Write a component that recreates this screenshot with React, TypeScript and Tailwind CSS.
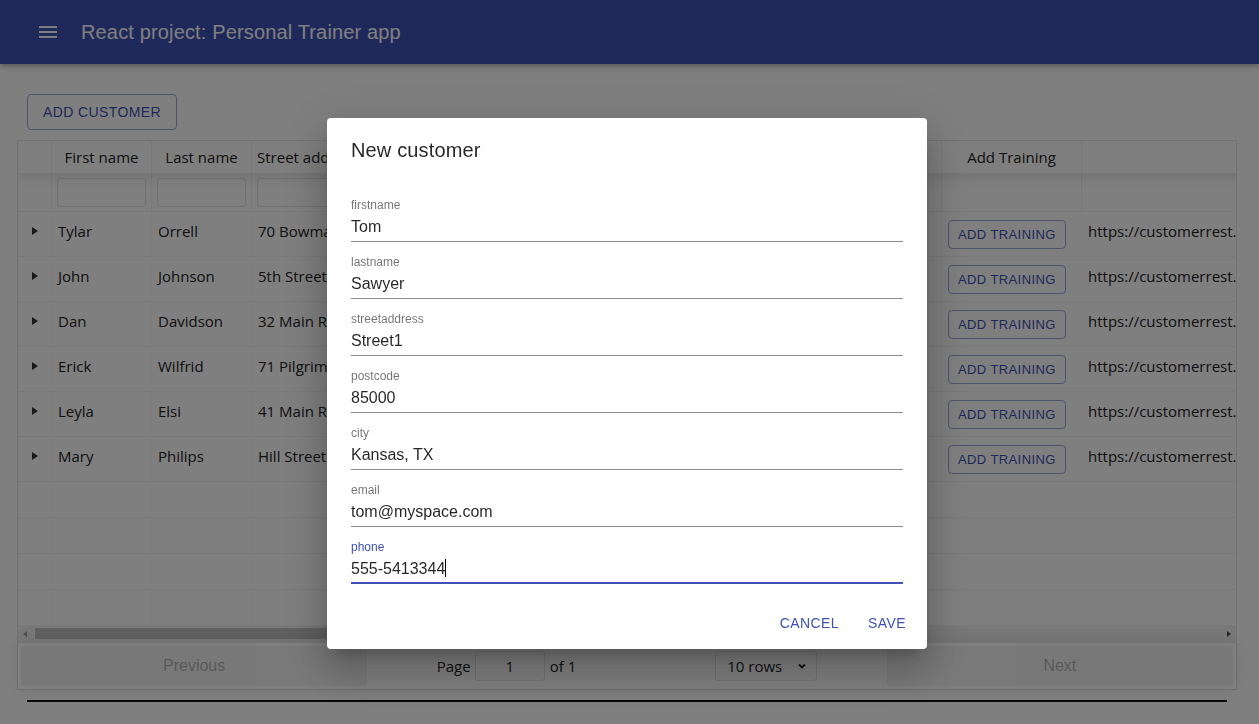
import React from 'react';

const cols = [
  { title: '', w: 34 },
  { title: 'First name', w: 100, filter: true },
  { title: 'Last name', w: 100, filter: true },
  { title: 'Street address', w: 100, filter: true },
  { title: 'Postcode', w: 100, filter: true },
  { title: 'City', w: 100, filter: true },
  { title: 'Email', w: 190, filter: true },
  { title: 'Phone', w: 100, filter: true },
  { title: '', w: 100 },
  { title: 'Add Training', w: 140 },
  { title: '', w: 300 },
];

const customers = [
  ['Tylar', 'Orrell', '70 Bowman St.', '23110', 'Boston', 'tylar@mail.com', '232-2345540'],
  ['John', 'Johnson', '5th Street', '23110', 'Flintsone', 'john@mail.com', '232-2345540'],
  ['Dan', 'Davidson', '32 Main Road', '32123', 'Newcastle', 'dan@mail.com', '221-5553421'],
  ['Erick', 'Wilfrid', '71 Pilgrim Avenue', '12345', 'Springfield', 'erick@mail.com', '555-2343232'],
  ['Leyla', 'Elsi', '41 Main Road', '45600', 'Kansas', 'leyla@mail.com', '555-1234567'],
  ['Mary', 'Philips', 'Hill Street 5', '54300', 'Boston', 'mary@mail.com', '555-9876543'],
];

const fields = [
  ['firstname', 'Tom'],
  ['lastname', 'Sawyer'],
  ['streetaddress', 'Street1'],
  ['postcode', '85000'],
  ['city', 'Kansas, TX'],
  ['email', 'tom@myspace.com'],
];

function Field({ label, value, focused }: { label: string; value: string; focused?: boolean }) {
  return (
    <div className="pt-[14px]">
      <div className={`text-[12px] leading-[12px] ${focused ? 'text-[#3f51b5]' : 'text-black/55'}`}>{label}</div>
      <div
        className={`mt-[6px] text-[16px] leading-[19px] text-black/85 ${
          focused ? 'pb-[4px] border-b-2 border-[#3f51b5]' : 'pb-[5px] border-b border-black/45'
        }`}
      >
        {value}
        {focused && <span className="inline-block w-px h-[18px] bg-black align-[-3px]" />}
      </div>
    </div>
  );
}

export default function App() {
  return (
    <div className="relative min-h-screen bg-white font-['Open_Sans',sans-serif] text-[15px] text-[#222]">
      <header className="relative z-10 h-16 bg-[#3f51b5] flex items-center pl-6 shadow-[0_2px_4px_-1px_rgba(0,0,0,0.2),0_4px_5px_0_rgba(0,0,0,0.14)]">
        <div className="w-12 h-12 flex items-center justify-center">
          <svg width="24" height="24" viewBox="0 0 24 24" fill="white">
            <path d="M3 18h18v-2H3v2zm0-5h18v-2H3v2zm0-7v2h18V6H3z" />
          </svg>
        </div>
        <h1 className="ml-[9px] font-['Liberation_Sans',sans-serif] text-[20px] text-white tracking-[0.15px]">
          React project: Personal Trainer app
        </h1>
      </header>

      <main className="pl-[17px] pr-[22px]">
        <div className="pt-[30px] pl-[10px]">
          <button className="h-[36px] px-[15px] rounded border border-[#3f51b5]/50 text-[#3f51b5] font-['Liberation_Sans',sans-serif] text-[14px] tracking-[0.4px]">
            ADD CUSTOMER
          </button>
        </div>

        <div className="mt-[10px] border border-black/10 flex flex-col">
          <div className="overflow-hidden">
            <div className="w-max">
              <div className="relative z-10 flex h-[32px] bg-white shadow-[0_2px_15px_0_rgba(0,0,0,0.15)]">
                {cols.map((c, i) => (
                  <div
                    key={i}
                    style={{ width: c.w }}
                    className="shrink-0 px-[5px] leading-[32px] text-center whitespace-nowrap overflow-hidden border-r border-black/5"
                  >
                    {c.title}
                  </div>
                ))}
              </div>
              <div className="flex h-[39px] border-b border-black/5">
                {cols.map((c, i) => (
                  <div key={i} style={{ width: c.w }} className="shrink-0 px-[5px] flex items-center border-r border-black/5">
                    {c.filter && <div className="w-full h-[29px] border border-black/10 rounded-[3px]" />}
                  </div>
                ))}
              </div>
              {customers.map((r, ri) => (
                <div key={ri} className="flex h-[45px] border-b border-black/5">
                  <div style={{ width: cols[0].w }} className="shrink-0 flex justify-center pt-[15px] border-r border-black/[0.02]">
                    <div className="w-0 h-0 border-y-[4px] border-y-transparent border-l-[6px] border-l-black/80" />
                  </div>
                  {r.map((v, ci) => (
                    <div
                      key={ci}
                      style={{ width: cols[ci + 1].w }}
                      className="shrink-0 px-[6px] pt-[7px] leading-[24px] whitespace-nowrap overflow-hidden border-r border-black/[0.02]"
                    >
                      {v}
                    </div>
                  ))}
                  <div style={{ width: cols[8].w }} className="shrink-0 border-r border-black/[0.02]" />
                  <div style={{ width: cols[9].w }} className="shrink-0 px-[6px] pt-[8px] border-r border-black/[0.02]">
                    <button className="h-[29px] px-[9px] rounded border border-[#3f51b5]/50 text-[#3f51b5] font-['Liberation_Sans',sans-serif] text-[13px] tracking-[0.4px]">
                      ADD TRAINING
                    </button>
                  </div>
                  <div style={{ width: cols[10].w }} className="shrink-0 px-[6px] pt-[7px] leading-[24px] whitespace-nowrap">
                    https://customerrest.herokuapp.com/api/customers/{ri + 1}
                  </div>
                </div>
              ))}
              {[0, 1, 2, 3].map((k) => (
                <div key={k} className="flex h-[36px] border-b border-black/5">
                  {cols.map((c, i) => (
                    <div key={i} style={{ width: c.w }} className="shrink-0 border-r border-black/[0.02]" />
                  ))}
                </div>
              ))}
            </div>
          </div>

          <div className="h-[15px] bg-[#f1f1f1] flex items-center px-[5px]">
            <div className="w-0 h-0 border-y-[3px] border-y-transparent border-r-[4px] border-r-[#a3a3a3]" />
            <div className="ml-[8px] w-[770px] h-[11px] bg-[#c1c1c1]" />
            <div className="flex-1" />
            <div className="w-0 h-0 border-y-[3px] border-y-transparent border-l-[4px] border-l-[#505050]" />
          </div>

          <div className="relative flex h-[48px] p-[3px] border-t-2 border-black/10 shadow-[0_0_15px_0_rgba(0,0,0,0.1)]">
            <div className="flex-1">
              <button className="w-full h-full rounded-[3px] bg-black/10 opacity-50 text-black/60 font-['Liberation_Sans',sans-serif] text-[16px]">
                Previous
              </button>
            </div>
            <div className="flex-[1.5] flex items-center justify-around text-[15px]">
              <div className="mx-[10px] flex items-center whitespace-nowrap">
                Page
                <div className="ml-[4px] mr-[5px] w-[70px] h-[30px] border border-black/10 rounded-[3px] flex items-center justify-center">
                  1
                </div>
                of 1
              </div>
              <div className="mx-[10px] w-[102px] h-[30px] border border-black/10 rounded-[3px] flex items-center pl-[11px] pr-[9px]">
                <span className="flex-1">10 rows</span>
                <svg width="10" height="10" viewBox="0 0 10 10" fill="none" stroke="#222" strokeWidth="1.8">
                  <path d="M2 3.5l3 3 3-3" />
                </svg>
              </div>
            </div>
            <div className="flex-1">
              <button className="w-full h-full rounded-[3px] bg-black/10 opacity-50 text-black/60 font-['Liberation_Sans',sans-serif] text-[16px]">
                Next
              </button>
            </div>
          </div>
        </div>

        <div className="mx-[10px] mt-[10px] border-t-2 border-[#111]" />
      </main>

      <div className="fixed inset-0 z-20 bg-black/50" />

      <div className="fixed inset-0 z-30 flex justify-center items-start pt-[118px] pr-[5px]">
        <div className="w-[600px] bg-white rounded shadow-[0_11px_15px_-7px_rgba(0,0,0,0.2),0_24px_38px_3px_rgba(0,0,0,0.14),0_9px_46px_8px_rgba(0,0,0,0.12)] font-['Liberation_Sans',sans-serif]">
          <div className="px-6 pt-4 pb-[19px] text-[20px] leading-8 text-black/85 tracking-[0.15px]">New customer</div>
          <div className="px-6">
            {fields.map(([l, v]) => (
              <Field key={l} label={l} value={v} />
            ))}
            <Field label="phone" value="555-5413344" focused />
          </div>
          <div className="mt-[13px] p-2 flex justify-end">
            <button className="h-[36px] min-w-[64px] px-2 rounded text-[#3f51b5] text-[14px] tracking-[0.4px]">
              CANCEL
            </button>
            <button className="ml-2 h-[36px] min-w-[64px] px-2 rounded text-[#3f51b5] text-[14px] tracking-[0.4px]">
              SAVE
            </button>
          </div>
        </div>
      </div>
    </div>
  );
}
